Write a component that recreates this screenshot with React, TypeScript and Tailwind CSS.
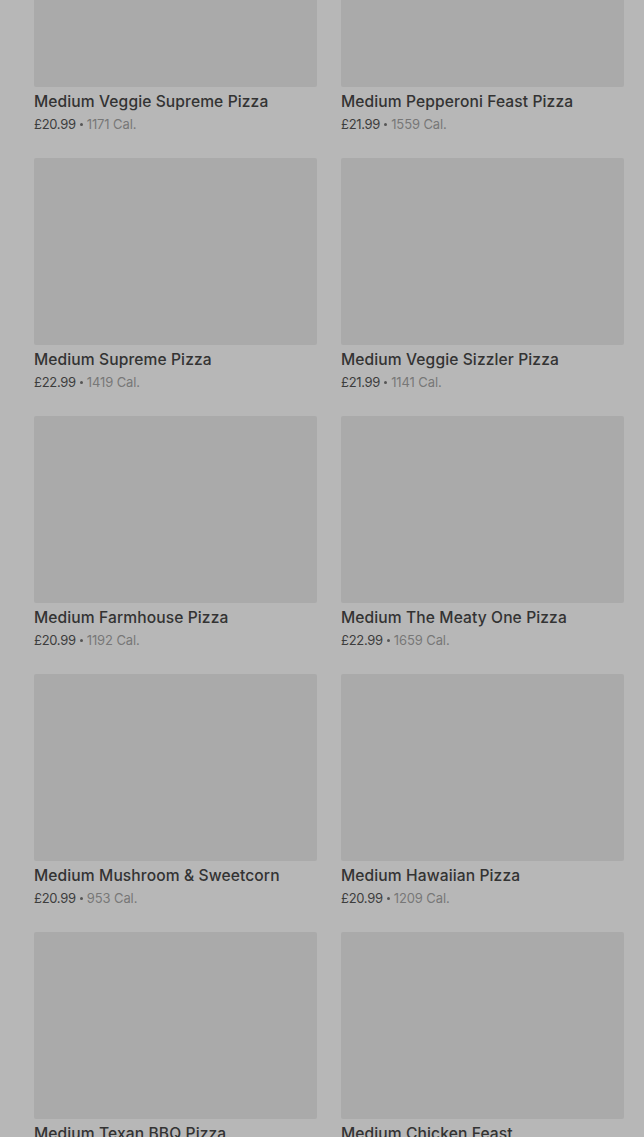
import React from "react";

const items = [
  { name: "Medium Veggie Supreme Pizza", price: "£20.99", cal: "1171 Cal." },
  { name: "Medium Pepperoni Feast Pizza", price: "£21.99", cal: "1559 Cal." },
  { name: "Medium Supreme Pizza", price: "£22.99", cal: "1419 Cal." },
  { name: "Medium Veggie Sizzler Pizza", price: "£21.99", cal: "1141 Cal." },
  { name: "Medium Farmhouse Pizza", price: "£20.99", cal: "1192 Cal." },
  { name: "Medium The Meaty One Pizza", price: "£22.99", cal: "1659 Cal." },
  { name: "Medium Mushroom & Sweetcorn", price: "£20.99", cal: "953 Cal." },
  { name: "Medium Hawaiian Pizza", price: "£20.99", cal: "1209 Cal." },
  { name: "Medium Texan BBQ Pizza", price: "£20.99", cal: "1100 Cal." },
  { name: "Medium Chicken Feast", price: "£21.99", cal: "1300 Cal." },
];

export default function App() {
  return (
    <div
      className="w-[644px] h-[1137px] overflow-hidden bg-[#b7b7b7]"
      style={{ fontFamily: "Inter, 'Noto Sans', sans-serif" }}
    >
      <div className="mt-[-100px] pl-[34px] pr-[20px] grid grid-cols-2 gap-x-[24px] gap-y-[25px]">
        {items.map((it) => (
          <div key={it.name} className="flex flex-col">
            <div className="h-[187px] bg-[#aaaaaa] rounded-[2px]" />
            <div className="mt-[5px] h-[20px] text-[15.6px] leading-[20px] font-medium text-[#333333] tracking-[0.1px] whitespace-nowrap">
              {it.name}
            </div>
            <div className="mt-[3px] h-[18px] flex items-center text-[13px] leading-[18px] text-[#3d3d3d] tracking-[-0.3px] whitespace-nowrap">
              <span>{it.price}</span>
              <span className="mx-[4px] mt-[1px] w-[3px] h-[3px] rounded-full bg-[#555555]" />
              <span className="text-[#777777] tracking-[-0.1px]">{it.cal}</span>
            </div>
          </div>
        ))}
      </div>
    </div>
  );
}
